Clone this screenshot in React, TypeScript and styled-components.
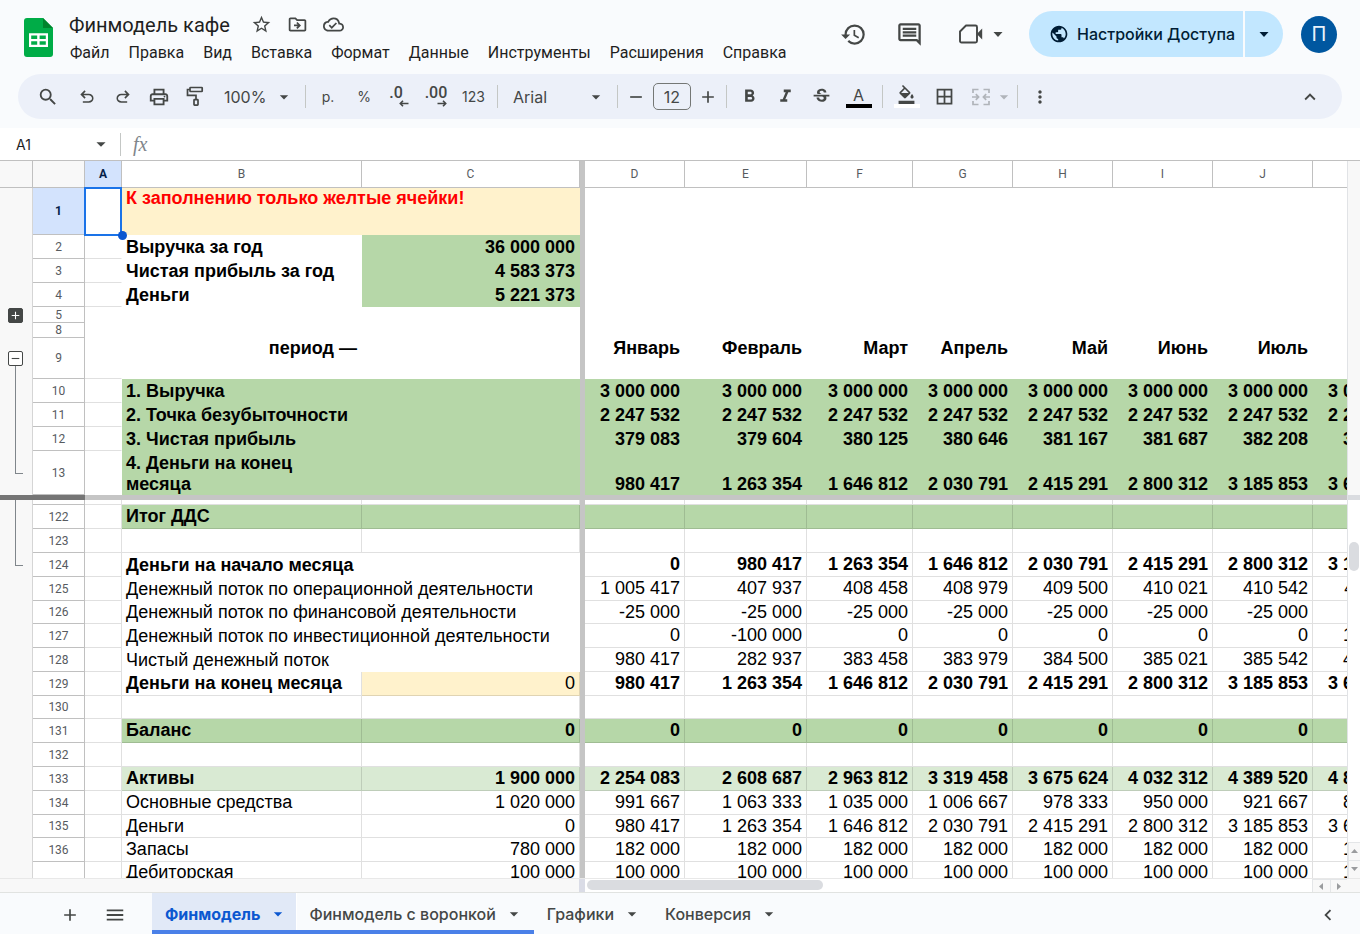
import React from "react";
import styled, { createGlobalStyle, css } from "styled-components";
import {
  MdAdd,
  MdArrowDropDown,
  MdBorderAll,
  MdChevronLeft,
  MdFormatBold,
  MdFormatColorFill,
  MdFormatItalic,
  MdHistory,
  MdKeyboardArrowUp,
  MdMenu,
  MdMoreVert,
  MdOutlineCloudDone,
  MdOutlineDriveFileMove,
  MdOutlineInsertComment,
  MdOutlinePrint,
  MdPublic,
  MdRemove,
  MdSearch,
  MdStarBorder,
  MdStrikethroughS,
} from "react-icons/md";

const UI_FONT = '"Inter", "Roboto", "Liberation Sans", sans-serif';
const TITLE_FONT = '"Roboto", "Liberation Sans", sans-serif';
const CELL_FONT = '"Liberation Sans", Arial, sans-serif';

const color = {
  chrome: "#f9fbfd",
  toolbar: "#ecf0f9",
  icon: "#444746",
  text: "#1f1f1f",
  muted: "#575b5f",
  line: "#c4c7c5",
  head: "#f8f8f8",
  headLine: "#c0c0c0",
  freeze: "#c5c5c5",
  selected: "#d3e3fd",
  blue: "#0b57d0",
  green: "#b6d7a8",
  lightGreen: "#d9ead3",
  yellow: "#fff2cc",
  thumb: "#dadce0",
};

const GlobalStyle = createGlobalStyle`
  *, *::before, *::after { box-sizing: border-box; }
  body { margin: 0; background: #fff; }
  button, input, select { font: inherit; color: inherit; margin: 0; padding: 0; border: 0; background: none; }
  button, select { cursor: pointer; }
`;

const Page = styled.div`
  display: flex;
  flex-direction: column;
  height: 100vh;
  font-family: ${UI_FONT};
  color: ${color.text};
`;

/* ---------- top bar ---------- */

const Chrome = styled.header`
  flex: none;
  background: ${color.chrome};
  padding-bottom: 9px;
`;

const TopBar = styled.div`
  display: flex;
  align-items: flex-start;
  height: 74px;
  padding: 0 23px 0 24px;
`;

const LogoLink = styled.a`
  display: block;
  width: 29px;
  height: 39px;
  margin: 18px 16px 0 0;
`;

const TitleBlock = styled.div`
  display: flex;
  flex-direction: column;
  padding-top: 11px;
  font-family: ${TITLE_FONT};
`;

const TitleRow = styled.div`
  display: flex;
  align-items: center;
  height: 27px;
`;

const DocTitle = styled.h1`
  margin: 0 14px 0 0;
  font-size: 20px;
  line-height: 26px;
  font-weight: 400;
`;

const PlainButton = styled.button`
  display: flex;
  align-items: center;
  justify-content: center;
  color: ${color.icon};
`;

const TitleButton = styled(PlainButton)`
  width: 36px;
  height: 24px;
`;

const MenuBar = styled.nav`
  display: flex;
  gap: 19px;
  margin-top: 4px;
  padding-left: 1px;
`;

const MenuItem = styled.button`
  font-size: 16px;
  line-height: 22px;
  white-space: nowrap;
`;

const Actions = styled.div`
  display: flex;
  align-items: center;
  margin-left: auto;
  height: 46px;
  margin-top: 11px;
`;

const ActionButton = styled(PlainButton)<{ $w: number }>`
  width: ${(p) => p.$w}px;
  height: 40px;
`;

const VideoCaret = styled.span`
  display: flex;
  margin-left: 10px;
`;

const Share = styled.div`
  display: flex;
  height: 46px;
  margin: 0 18px 0 8px;
  border-radius: 23px;
  overflow: hidden;
  background: #c2e7ff;
  color: #001d35;
`;

const ShareButton = styled.button`
  display: flex;
  align-items: center;
  gap: 8px;
  width: 216px;
  padding-left: 20px;
  font-size: 16px;
  font-weight: 500;
  white-space: nowrap;
  border-right: 2px solid ${color.chrome};
`;

const ShareMore = styled.button`
  display: flex;
  align-items: center;
  justify-content: center;
  width: 38px;
`;

const Avatar = styled.button`
  width: 36px;
  height: 37px;
  border-radius: 50%;
  background: #0057a0;
  color: #e8f2fb;
  font-size: 20px;
  line-height: 36px;
`;

/* ---------- toolbar ---------- */

const Toolbar = styled.div`
  display: flex;
  align-items: center;
  height: 45px;
  margin: 0 18px;
  padding: 0 14px 0 9px;
  border-radius: 23px;
  background: ${color.toolbar};
  color: ${color.icon};
  font-size: 16px;
`;

const Tool = styled.button<{ $w?: number; $small?: boolean }>`
  display: flex;
  flex: none;
  align-items: center;
  justify-content: center;
  width: ${(p) => p.$w ?? 36}px;
  height: 36px;
  color: ${color.icon};
  font-size: ${(p) => (p.$small ? 14 : 16)}px;
`;

const MergeTool = styled(Tool)`
  justify-content: flex-start;
  gap: 3px;
  padding-left: 9px;
  color: #b0b4ba;
  svg { flex: none; }
`;

const Divider = styled.span`
  flex: none;
  width: 1px;
  height: 23px;
  margin: 0 4px;
  background: ${color.line};
`;

const Spacer = styled.span`
  flex: 1;
`;

const SelectBox = styled.label<{ $w: number }>`
  display: grid;
  flex: none;
  align-items: center;
  width: ${(p) => p.$w}px;
  height: 36px;
  > * { grid-area: 1 / 1; }
  > svg { justify-self: end; margin-right: 7px; pointer-events: none; }
`;

const Select = styled.select`
  appearance: none;
  width: 100%;
  padding-left: 11px;
  outline: none;
`;

const SizeInput = styled.input`
  flex: none;
  width: 38px;
  height: 27px;
  margin: 0 3px;
  border: 1px solid #747775;
  border-radius: 5px;
  text-align: center;
`;

const Swatched = styled.span<{ $swatch: string }>`
  display: flex;
  flex-direction: column;
  align-items: center;
  justify-content: flex-end;
  width: 26px;
  height: 22px;
  border-bottom: 4px solid ${(p) => p.$swatch};
  line-height: 18px;
  svg { flex: none; }
`;

/* ---------- formula bar ---------- */

const FormulaBar = styled.div`
  display: flex;
  flex: none;
  align-items: center;
  height: 32px;
  background: #fff;
`;

const NameBox = styled.input`
  width: 90px;
  padding-left: 16px;
  font-size: 14px;
`;

const NameBoxMenu = styled(PlainButton)`
  padding-right: 4px;
`;

const FormulaInput = styled.input`
  flex: 1;
  height: 30px;
  font-size: 14px;
`;

const Fx = styled.span`
  padding: 0 12px 0 8px;
  font: italic 400 20px/28px "Liberation Serif", serif;
  color: #80868b;
`;

/* ---------- sheet ---------- */

const SheetArea = styled.main`
  display: flex;
  flex: 1;
  min-height: 0;
  border-top: 1px solid ${color.headLine};
`;

const SheetClip = styled.div`
  flex: 1;
  min-width: 0;
  overflow: hidden;
  border-right: 1px solid #e1e3e6;
`;

const Grid = styled.table`
  table-layout: fixed;
  border-collapse: separate;
  border-spacing: 0;
  width: max(100%, 1413px);
  font: 18px/21px ${CELL_FONT};
  color: #000;
  td, th { padding: 0; }
`;

const HeadCell = styled.th<{ $selected?: boolean; $blank?: boolean }>`
  height: 27px;
  border-right: 1px solid ${color.headLine};
  border-bottom: 1px solid ${color.headLine};
  background: ${(p) => (p.$selected ? color.selected : p.$blank ? color.head : "#fff")};
  color: ${(p) => (p.$selected ? "#041e49" : color.muted)};
  font: ${(p) => (p.$selected ? 700 : 400)} 12px/14px Roboto, sans-serif;
`;

const RowHead = styled(HeadCell)`
  height: auto;
  line-height: 12px;
`;

const FreezeCell = styled.td`
  background: ${color.freeze};
`;

const FreezeBar = styled.tr`
  height: 5px;
  line-height: 0;
  td:first-child { background: #757575; }
`;

type Group = "plus" | "start" | "line" | "end";

const stroke = "linear-gradient(#80868b, #80868b)";
const groupLine: Record<Group, ReturnType<typeof css> | null> = {
  plus: null,
  start: css`
    background: ${stroke} 15px 100% / 1px 50% no-repeat, ${color.head};
  `,
  line: css`
    background: ${stroke} 15px 0 / 1px 100% no-repeat, ${color.head};
  `,
  end: css`
    background: ${stroke} 15px 0 / 1px 50% no-repeat, ${stroke} 15px 50% / 8px 1px no-repeat, ${color.head};
  `,
};

const Gutter = styled.td<{ $group?: Group }>`
  border-right: 1px solid #d5d5d5;
  background: ${color.head};
  line-height: 0;
  && { padding-left: 8px; }
  ${(p) => p.$group && groupLine[p.$group]}
`;

const GroupToggle = styled.button<{ $dark?: boolean }>`
  display: flex;
  align-items: center;
  justify-content: center;
  width: 15px;
  height: 15px;
  border: 1px solid ${color.icon};
  border-radius: 2px;
  background: ${(p) => (p.$dark ? color.icon : "#fff")};
  color: ${(p) => (p.$dark ? "#fff" : color.icon)};
`;

type Edges = "both" | "bottom" | "none";

const Cell = styled.td<{
  $fill?: string;
  $edges: Edges;
  $bold?: boolean;
  $right?: boolean;
  $v?: string;
  $wrap?: boolean;
}>`
  && { padding: 0 4px; }
  background: ${(p) => p.$fill ?? "transparent"};
  font-weight: ${(p) => (p.$bold ? 700 : 400)};
  text-align: ${(p) => (p.$right ? "right" : "left")};
  vertical-align: ${(p) => p.$v ?? "middle"};
  white-space: ${(p) => (p.$wrap ? "normal" : "nowrap")};
  border: 0 solid rgba(0, 0, 0, 0.12);
  border-right: 1px solid ${(p) => (p.$edges === "both" ? "rgba(0, 0, 0, 0.12)" : "transparent")};
  border-bottom-width: ${(p) => (p.$edges === "none" ? 0 : 1)}px;
`;

const Notice = styled.span`
  color: #f00;
`;

const SelectedCell = styled.td`
  position: relative;
  &::before {
    content: "";
    position: absolute;
    inset: -1px 0 -1px -1px;
    border: 2px solid #1a73e8;
  }
  &::after {
    content: "";
    position: absolute;
    right: -5px;
    bottom: -5px;
    width: 9px;
    height: 9px;
    border-radius: 50%;
    background: ${color.blue};
    z-index: 1;
  }
`;

/* ---------- scroll bars ---------- */

const VScroll = styled.div`
  display: flex;
  flex: none;
  flex-direction: column;
  width: 12px;
`;

const VFrozen = styled.div`
  height: 339px;
  background: ${color.head};
  border-bottom: 5px solid ${color.thumb};
`;

const VTrack = styled.div`
  flex: 1;
  padding: 42px 1px 0;
`;

const VThumb = styled.div`
  height: 29px;
  border-radius: 5px;
  background: ${color.thumb};
`;

const ScrollStep = styled.button<{ $w: number; $h: number }>`
  display: flex;
  flex: none;
  align-items: center;
  justify-content: center;
  width: ${(p) => p.$w}px;
  height: ${(p) => p.$h}px;
  border: 0 solid #e4e6e8;
  border-width: 1px 0 0 1px;
  background: ${color.head};
  color: #9a9c9e;
`;

const HScroll = styled.div`
  display: flex;
  flex: none;
  height: 14px;
  border-top: 1px solid #e8e8e8;
  background: #fff;
`;

const HFrozen = styled.div`
  flex: none;
  width: 585px;
  border-right: 6px solid #dadce6;
  background: ${color.head};
`;

const HTrack = styled.div`
  flex: 1;
  padding: 1px 2px;
`;

const HThumb = styled.div`
  width: 236px;
  height: 10px;
  border-radius: 5px;
  background: ${color.thumb};
`;

const Corner = styled.div`
  width: 13px;
  background: ${color.head};
`;

/* ---------- sheet tabs ---------- */

const TabBar = styled.footer`
  display: flex;
  flex: none;
  height: 42px;
  padding: 0 14px 0 52px;
  border-top: 1px solid #e1e3e1;
  background: ${color.chrome};
`;

const TabTool = styled(PlainButton)<{ $w: number }>`
  width: ${(p) => p.$w}px;
  padding-top: 2px;
`;

const TabList = styled.div`
  display: flex;
  margin-left: 10px;
`;

const Tab = styled.button<{ $active?: boolean; $marked?: boolean }>`
  display: flex;
  align-items: center;
  gap: 8px;
  padding: 5px ${(p) => (p.$active ? 8 : 10)}px 0 13px;
  border-bottom: 4px solid ${(p) => (p.$marked ? "#4a80e8" : "transparent")};
  box-shadow: ${(p) => (p.$active ? "1px 0 0 #fff" : "none")};
  background: ${(p) => (p.$active ? "#e1e9f7" : "transparent")};
  color: ${(p) => (p.$active ? color.blue : color.icon)};
  font-size: 16px;
  font-weight: ${(p) => (p.$active ? 700 : 500)};
  white-space: nowrap;
`;

/* ---------- drawings ---------- */

const SheetsLogo = () => (
  <svg width="29" height="39" viewBox="0 0 29 39" aria-hidden="true">
    <path d="M3 0h16l10 10v26a3 3 0 0 1-3 3H3a3 3 0 0 1-3-3V3a3 3 0 0 1 3-3z" fill="#00ac47" />
    <path d="M19 0l10 10H19z" fill="#00832d" />
    <path
      d="M5 15.300h19v13.700H5zM7.200 17.500v3.500h6v-3.500zM15.600 17.500v3.500h6.200v-3.500zM7.200 23.200v3.600h6v-3.600zM15.600 23.200v3.600h6.200v-3.600z"
      fill="#fff"
      fillRule="evenodd"
    />
  </svg>
);

const Undo = () => (
  <svg width="20" height="20" viewBox="0 -960 960 960" fill="currentColor" aria-hidden="true">
    <path d="M280-200v-80h284q63 0 109.500-40T720-420q0-60-46.500-100T564-560H312l104 104-56 56-200-200 200-200 56 56-104 104h252q97 0 163 63t66 157q0 94-66 157t-163 63H280Z" />
  </svg>
);

const Redo = () => (
  <svg width="20" height="20" viewBox="0 -960 960 960" fill="currentColor" aria-hidden="true">
    <path d="M396-200q-97 0-163-63t-66-157q0-94 66-157t163-63h252L544-744l56-56 200 200-200 200-56-56 104-104H396q-63 0-109.500 40T240-420q0 60 46.500 100T396-280h284v80H396Z" />
  </svg>
);

const PaintRoller = () => (
  <svg width="18" height="21" viewBox="0 0 18 21" fill="none" stroke="currentColor" strokeWidth="1.700" aria-hidden="true">
    <rect x="4" y="1.500" width="12.200" height="4" rx="0.600" />
    <path d="M4 3.500H1.500V9.400H10v4" />
    <rect x="8" y="13.600" width="4" height="5.600" rx="0.600" />
  </svg>
);

const Camera = () => (
  <svg width="24" height="20" viewBox="0 0 24 20" aria-hidden="true">
    <path
      d="M7 1.500h9.500A1.500 1.500 0 0 1 18 3v14a1.500 1.500 0 0 1-1.500 1.500h-14A1.500 1.500 0 0 1 1 17V7.500z"
      fill="none"
      stroke="currentColor"
      strokeWidth="1.900"
      strokeLinejoin="round"
    />
    <path d="M18.500 9.200L23.200 4.500v11L18.500 10.800z" fill="currentColor" />
  </svg>
);

const Merge = () => (
  <svg width="20" height="18" viewBox="0 0 20 18" fill="none" stroke="currentColor" strokeWidth="1.700" aria-hidden="true">
    <path d="M7.500 1.500H2V5M12.500 1.500H18V5M7.500 16.500H2V13M12.500 16.500H18V13M1 9h6M19 9h-6M4.800 6.200L7.600 9l-2.800 2.800M15.200 6.200L12.400 9l2.800 2.800" />
  </svg>
);

const Decimals = styled.span<{ $less?: boolean }>`
  display: flex;
  flex-direction: column;
  padding-right: ${(p) => (p.$less ? 8 : 0)}px;
  font: 500 16px/14px ${TITLE_FONT};
  svg { align-self: flex-end; margin-right: ${(p) => (p.$less ? -6 : 0)}px; }
`;

const SmallArrow = ({ flip }: { flip?: boolean }) => (
  <svg width="10" height="7" viewBox="0 0 10 7" fill="none" stroke="currentColor" strokeWidth="1.600" aria-hidden="true">
    {flip ? <path d="M0.500 3.500h8M6 0.800l2.700 2.700L6 6.200" /> : <path d="M9.500 3.500h-8M4 0.800L1.300 3.500 4 6.200" />}
  </svg>
);

const Caret = () => (
  <svg width="10" height="5" viewBox="0 0 10 5" aria-hidden="true">
    <path d="M0.500 0h9L5 5z" fill="currentColor" />
  </svg>
);

const stepPaths = {
  up: "M0 5h7L3.500 1z",
  down: "M0 1h7L3.500 5z",
  left: "M5 0v7L1 3.500z",
  right: "M1 0v7l4-3.500z",
};

const Step = ({ dir, w, h }: { dir: keyof typeof stepPaths; w: number; h: number }) => (
  <ScrollStep $w={w} $h={h} aria-label={`Scroll ${dir}`}>
    <svg width="7" height="7" viewBox="0 0 7 7" aria-hidden="true">
      <path d={stepPaths[dir]} fill="currentColor" />
    </svg>
  </ScrollStep>
);

/* ---------- data ---------- */

const MENU = ["Файл", "Правка", "Вид", "Вставка", "Формат", "Данные", "Инструменты", "Расширения", "Справка"];
const COLUMN_WIDTHS = [33, 52, 37, 240, 218, 5, 100, 122, 106, 100, 100, 100, 100, 100];
const MONTH_COLUMNS = ["D", "E", "F", "G", "H", "I", "J", ""];
const EMPTY = MONTH_COLUMNS.map(() => "");

type Row = {
  n: string;
  h: number;
  group?: Group;
  label?: string;
  total?: string;
  months?: string[];
  bold?: boolean;
  totalBold?: boolean;
  fill?: string;
  totalFill?: string;
  spill?: boolean;
  v?: string;
  labelRight?: boolean;
  wrap?: boolean;
  lineA?: boolean;
};

const list = (s: string) => s.split("|");

const FROZEN: Row[] = [
  { n: "2", h: 24, label: "Выручка за год", total: "36 000 000", totalFill: color.green, bold: true, lineA: true },
  { n: "3", h: 24, label: "Чистая прибыль за год", total: "4 583 373", totalFill: color.green, bold: true, lineA: true },
  { n: "4", h: 24, label: "Деньги", total: "5 221 373", totalFill: color.green, bold: true, lineA: true },
  { n: "5", h: 16, group: "plus" },
  { n: "8", h: 15 },
  {
    n: "9", h: 41, group: "start", label: "период —", labelRight: true, bold: true, v: "top", lineA: true,
    months: list("Январь|Февраль|Март|Апрель|Май|Июнь|Июль|"),
  },
  {
    n: "10", h: 24, group: "line", label: "1. Выручка", bold: true, fill: color.green, lineA: true,
    months: EMPTY.map(() => "3 000 000"),
  },
  {
    n: "11", h: 24, group: "line", label: "2. Точка безубыточности", bold: true, fill: color.green, lineA: true,
    months: EMPTY.map(() => "2 247 532"),
  },
  {
    n: "12", h: 24, group: "line", label: "3. Чистая прибыль", bold: true, fill: color.green, lineA: true,
    months: list("379 083|379 604|380 125|380 646|381 167|381 687|382 208|382 729"),
  },
  {
    n: "13", h: 44, group: "end", label: "4. Деньги на конец месяца", bold: true, fill: color.green, v: "bottom", wrap: true,
    months: list("980 417|1 263 354|1 646 812|2 030 791|2 415 291|2 800 312|3 185 853|3 671 916"),
  },
];

const BODY: Row[] = [
  { n: "", h: 5, group: "line" },
  { n: "122", h: 24, group: "line", label: "Итог ДДС", bold: true, fill: color.green },
  { n: "123", h: 24, group: "line" },
  {
    n: "124", h: 24, group: "end", label: "Деньги на начало месяца", bold: true, spill: true,
    months: list("0|980 417|1 263 354|1 646 812|2 030 791|2 415 291|2 800 312|3 185 853"),
  },
  {
    n: "125", h: 24, label: "Денежный поток по операционной деятельности", spill: true,
    months: list("1 005 417|407 937|408 458|408 979|409 500|410 021|410 542|411 063"),
  },
  {
    n: "126", h: 23, label: "Денежный поток по финансовой деятельности", spill: true,
    months: list("-25 000|-25 000|-25 000|-25 000|-25 000|-25 000|-25 000|"),
  },
  {
    n: "127", h: 24, label: "Денежный поток по инвестиционной деятельности", spill: true,
    months: list("0|-100 000|0|0|0|0|0|100 000"),
  },
  {
    n: "128", h: 24, label: "Чистый денежный поток", spill: true,
    months: list("980 417|282 937|383 458|383 979|384 500|385 021|385 542|486 063"),
  },
  {
    n: "129", h: 24, label: "Деньги на конец месяца", total: "0", totalFill: color.yellow, bold: true, totalBold: false,
    months: list("980 417|1 263 354|1 646 812|2 030 791|2 415 291|2 800 312|3 185 853|3 671 916"),
  },
  { n: "130", h: 23 },
  { n: "131", h: 24, label: "Баланс", total: "0", bold: true, fill: color.green, months: list("0|0|0|0|0|0|0|") },
  { n: "132", h: 24 },
  {
    n: "133", h: 24, label: "Активы", total: "1 900 000", bold: true, fill: color.lightGreen,
    months: list("2 254 083|2 608 687|2 963 812|3 319 458|3 675 624|4 032 312|4 389 520|4 847 249"),
  },
  {
    n: "134", h: 24, label: "Основные средства", total: "1 020 000",
    months: list("991 667|1 063 333|1 035 000|1 006 667|978 333|950 000|921 667|893 333"),
  },
  {
    n: "135", h: 23, label: "Деньги", total: "0",
    months: list("980 417|1 263 354|1 646 812|2 030 791|2 415 291|2 800 312|3 185 853|3 671 916"),
  },
  { n: "136", h: 24, label: "Запасы", total: "780 000", months: EMPTY.map(() => "182 000") },
  { n: "", h: 45, label: "Дебиторская", total: "100 000", v: "top", months: EMPTY.map(() => "100 000") },
];

const SheetRow = ({ row, frozen }: { row: Row; frozen?: boolean }) => {
  const inner: Edges = frozen ? "none" : "both";
  const left: Edges = frozen || row.spill ? "none" : "both";
  return (
    <tr style={{ height: row.h }}>
      <Gutter $group={row.group}>
        {row.group === "plus" && (
          <GroupToggle $dark aria-label="Развернуть группу">
            <MdAdd size={13} />
          </GroupToggle>
        )}
        {row.group === "start" && (
          <GroupToggle aria-label="Свернуть группу">
            <MdRemove size={13} />
          </GroupToggle>
        )}
      </Gutter>
      <RowHead scope="row">{row.n}</RowHead>
      <Cell $edges={frozen ? (row.lineA ? "bottom" : "none") : "both"} />
      <Cell $fill={row.fill} $edges={left} $bold={row.bold} $right={row.labelRight} $v={row.v} $wrap={row.wrap}>
        {row.label}
      </Cell>
      <Cell $fill={row.totalFill ?? row.fill} $edges={left} $bold={row.totalBold ?? row.bold} $right $v={row.v}>
        {row.total}
      </Cell>
      <FreezeCell />
      {(row.months ?? EMPTY).map((value, i) => (
        <Cell key={i} $fill={row.fill} $edges={inner} $bold={row.bold} $right $v={row.v}>
          {value}
        </Cell>
      ))}
      <Cell $fill={row.fill} $edges={inner} />
    </tr>
  );
};

const Sheet = () => (
  <Grid>
    <colgroup>
      {COLUMN_WIDTHS.map((w, i) => (
        <col key={i} style={{ width: w }} />
      ))}
      <col />
    </colgroup>
    <thead>
      <tr>
        <HeadCell $blank />
        <HeadCell $blank />
        <HeadCell $selected scope="col">A</HeadCell>
        <HeadCell scope="col">B</HeadCell>
        <HeadCell scope="col">C</HeadCell>
        <FreezeCell />
        {MONTH_COLUMNS.map((name, i) => (
          <HeadCell key={i} scope="col">{name}</HeadCell>
        ))}
        <HeadCell />
      </tr>
    </thead>
    <tbody>
      <tr style={{ height: 47 }}>
        <Gutter />
        <RowHead scope="row" $selected>1</RowHead>
        <SelectedCell />
        <Cell colSpan={2} $fill={color.yellow} $edges="none" $bold $v="top">
          <Notice>К заполнению только желтые ячейки!</Notice>
        </Cell>
        <FreezeCell />
        <Cell colSpan={9} $edges="none" />
      </tr>
      {FROZEN.map((row) => (
        <SheetRow key={row.n} row={row} frozen />
      ))}
    </tbody>
    <tbody>
      <FreezeBar>
        <td colSpan={2} />
        <FreezeCell colSpan={13} />
      </FreezeBar>
      {BODY.map((row, i) => (
        <SheetRow key={i} row={row} />
      ))}
    </tbody>
  </Grid>
);

export default function App() {
  return (
    <Page>
      <GlobalStyle />
      <Chrome>
        <TopBar>
          <LogoLink href="#" aria-label="Таблицы">
            <SheetsLogo />
          </LogoLink>
          <TitleBlock>
            <TitleRow>
              <DocTitle>Финмодель кафе</DocTitle>
              <TitleButton aria-label="Пометить"><MdStarBorder size={21} /></TitleButton>
              <TitleButton aria-label="Переместить"><MdOutlineDriveFileMove size={21} /></TitleButton>
              <TitleButton aria-label="Статус документа"><MdOutlineCloudDone size={21} /></TitleButton>
            </TitleRow>
            <MenuBar>
              {MENU.map((item) => (
                <MenuItem key={item}>{item}</MenuItem>
              ))}
            </MenuBar>
          </TitleBlock>
          <Actions>
            <ActionButton $w={48} aria-label="История версий"><MdHistory size={27} /></ActionButton>
            <ActionButton $w={64} aria-label="Комментарии"><MdOutlineInsertComment size={27} /></ActionButton>
            <ActionButton $w={80} aria-label="Видеовстреча">
              <Camera />
              <VideoCaret><Caret /></VideoCaret>
            </ActionButton>
            <Share>
              <ShareButton>
                <MdPublic size={20} />
                Настройки Доступа
              </ShareButton>
              <ShareMore aria-label="Другие настройки доступа"><Caret /></ShareMore>
            </Share>
            <Avatar aria-label="Аккаунт">П</Avatar>
          </Actions>
        </TopBar>
        <Toolbar role="toolbar">
          <Tool $w={42} aria-label="Поиск"><MdSearch size={22} /></Tool>
          <Tool aria-label="Отменить"><Undo /></Tool>
          <Tool aria-label="Повторить"><Redo /></Tool>
          <Tool aria-label="Печать"><MdOutlinePrint size={22} /></Tool>
          <Tool aria-label="Копировать форматирование"><PaintRoller /></Tool>
          <SelectBox $w={88}>
            <Select defaultValue="100%" aria-label="Масштаб"><option>100%</option></Select>
            <MdArrowDropDown size={20} />
          </SelectBox>
          <Divider />
          <Tool $small>р.</Tool>
          <Tool $small>%</Tool>
          <Tool aria-label="Уменьшить число знаков"><Decimals $less>.0<SmallArrow /></Decimals></Tool>
          <Tool aria-label="Увеличить число знаков"><Decimals>.00<SmallArrow flip /></Decimals></Tool>
          <Tool $w={39} $small>123</Tool>
          <Divider />
          <SelectBox $w={111}>
            <Select defaultValue="Arial" aria-label="Шрифт"><option>Arial</option></Select>
            <MdArrowDropDown size={20} />
          </SelectBox>
          <Divider />
          <Tool $w={28} aria-label="Уменьшить шрифт"><MdRemove size={20} /></Tool>
          <SizeInput defaultValue="12" aria-label="Размер шрифта" />
          <Tool $w={28} aria-label="Увеличить шрифт"><MdAdd size={20} /></Tool>
          <Divider />
          <Tool aria-label="Полужирный"><MdFormatBold size={21} /></Tool>
          <Tool aria-label="Курсив"><MdFormatItalic size={21} /></Tool>
          <Tool aria-label="Зачеркнутый"><MdStrikethroughS size={21} /></Tool>
          <Tool $w={39} aria-label="Цвет текста"><Swatched $swatch="#000">A</Swatched></Tool>
          <Divider />
          <Tool $w={39} aria-label="Цвет заливки">
            <Swatched $swatch="#fff"><MdFormatColorFill size={19} /></Swatched>
          </Tool>
          <Tool aria-label="Границы"><MdBorderAll size={21} /></Tool>
          <MergeTool $w={51} aria-label="Объединить ячейки">
            <Merge />
            <MdArrowDropDown size={20} />
          </MergeTool>
          <Divider />
          <Tool aria-label="Ещё"><MdMoreVert size={20} /></Tool>
          <Spacer />
          <Tool aria-label="Скрыть меню"><MdKeyboardArrowUp size={22} /></Tool>
        </Toolbar>
      </Chrome>
      <FormulaBar>
        <NameBox defaultValue="A1" aria-label="Имя диапазона" />
        <NameBoxMenu aria-label="Диапазоны"><MdArrowDropDown size={22} /></NameBoxMenu>
        <Divider />
        <Fx>fx</Fx>
        <FormulaInput aria-label="Формула" />
      </FormulaBar>
      <SheetArea>
        <SheetClip>
          <Sheet />
        </SheetClip>
        <VScroll>
          <VFrozen />
          <VTrack><VThumb /></VTrack>
          <Step dir="up" w={12} h={18} />
          <Step dir="down" w={12} h={18} />
        </VScroll>
      </SheetArea>
      <HScroll>
        <HFrozen />
        <HTrack><HThumb /></HTrack>
        <Step dir="left" w={18} h={13} />
        <Step dir="right" w={17} h={13} />
        <Corner />
      </HScroll>
      <TabBar>
        <TabTool $w={36} aria-label="Добавить лист"><MdAdd size={20} /></TabTool>
        <TabTool $w={54} aria-label="Все листы"><MdMenu size={22} /></TabTool>
        <TabList role="tablist">
          <Tab role="tab" aria-selected $active $marked>Финмодель<MdArrowDropDown size={20} /></Tab>
          <Tab role="tab" $marked>Финмодель с воронкой<MdArrowDropDown size={20} /></Tab>
          <Tab role="tab">Графики<MdArrowDropDown size={20} /></Tab>
          <Tab role="tab">Конверсия<MdArrowDropDown size={20} /></Tab>
        </TabList>
        <Spacer />
        <TabTool $w={36} aria-label="Боковая панель"><MdChevronLeft size={22} /></TabTool>
      </TabBar>
    </Page>
  );
}
